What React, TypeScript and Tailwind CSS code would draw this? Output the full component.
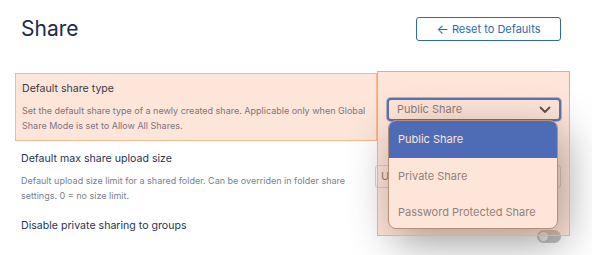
import React from "react";

export default function App() {
  return (
    <div
      className="relative w-[592px] h-[255px] overflow-hidden bg-white"
      style={{ fontFamily: "Inter, 'Liberation Sans', sans-serif" }}
    >
      {/* Header */}
      <div className="flex items-start justify-between pl-[21px] pr-[31px] pt-[17px]">
        <h1 className="text-[21px] leading-[24px] text-[#1c2b4d] font-normal">Share</h1>
        <button className="h-[24px] w-[145px] rounded-[3px] border border-[#2c6ab0] text-[11px] text-[#2c6ab0] flex items-center justify-center gap-[3px]">
          <span className="text-[13px] leading-none">←</span>
          <span>Reset to Defaults</span>
        </button>
      </div>

      {/* Row 1 */}
      <div className="flex mt-[32px]">
        <div className="ml-[15px] w-[362px] h-[68px] border border-[#f8b892] bg-[#fde5d9] px-[6px] pt-[7px]">
          <div className="text-[10.6px] leading-[16px] text-[#3d3a48]">Default share type</div>
          <div className="mt-[6px] text-[9px] leading-[15px] text-[#7d7580]">
            Set the default share type of a newly created share. Applicable only when Global
            <br />
            Share Mode is set to Allow All Shares.
          </div>
        </div>
        <div className="relative pl-[10px] pt-[25px]">
          <div className="relative z-10 w-[174px] h-[23px] rounded-[4px] border-2 border-[#1f5fc0] bg-white shadow-[0_0_0_1px_#9fb3d6] flex items-center justify-between pl-[8px] pr-[8px]">
            <span className="text-[11px] text-[#6b6a78]">Public Share</span>
            <svg width="12" height="8" viewBox="0 0 12 8" fill="none">
              <path d="M1.5 1.5 L6 6 L10.5 1.5" stroke="#2a2a36" strokeWidth="1.8" strokeLinecap="round" strokeLinejoin="round" />
            </svg>
          </div>
          <div className="absolute z-20 left-[11px] top-[47px] w-[170px] h-[109px] rounded-[8px] border border-[#a08478] bg-white overflow-hidden shadow-[6px_12px_44px_rgba(0,0,0,0.42)]">
            <div className="h-[37px] bg-[#0d56cd] flex items-center pl-[9px] text-[11px] text-white">Public Share</div>
            <div className="h-[36px] flex items-center pl-[9px] text-[11px] text-[#6e6f80]">Private Share</div>
            <div className="h-[36px] flex items-center pl-[9px] text-[11px] text-[#6e6f80]">Password Protected Share</div>
          </div>
        </div>
      </div>

      {/* Row 2 */}
      <div className="flex mt-[10px]">
        <div className="ml-[21px] w-[354px]">
          <div className="text-[10.6px] leading-[16px] text-[#283454]">Default max share upload size</div>
          <div className="mt-[6px] text-[9px] leading-[15px] text-[#7b8190]">
            Default upload size limit for a shared folder. Can be overriden in folder share
            <br />
            settings. 0 = no size limit.
          </div>
        </div>
        <div className="mt-[14px] w-[186px] h-[23px] rounded-[3px] border border-[#d6d6da] bg-white flex items-center pl-[5px] text-[11px] text-[#6b6a78]">
          Unlimited
        </div>
      </div>

      {/* Row 3 */}
      <div className="flex items-start mt-[15px]">
        <div className="ml-[21px] w-[516px] text-[10.6px] leading-[16px] text-[#283454]">
          Disable private sharing to groups
        </div>
        <div className="mt-[12px] w-[24px] h-[13px] rounded-full bg-[#c4c4c4] flex items-center pl-[2px]">
          <div className="w-[9px] h-[9px] rounded-full bg-[#eeeeee]" />
        </div>
      </div>

      {/* highlight overlay */}
      <div className="pointer-events-none absolute z-30 left-[377px] top-[71px] w-[193px] h-[165px] border border-[#f6a87c] bg-[rgba(248,165,120,0.28)]" />
    </div>
  );
}
